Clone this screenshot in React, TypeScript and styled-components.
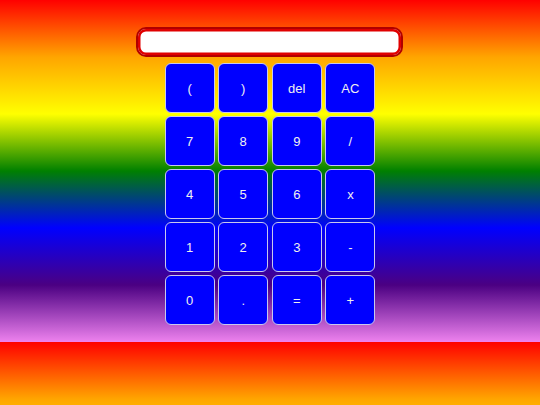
import { createGlobalStyle, styled } from 'styled-components'

const keys = ['(', ')', 'del', 'AC', '7', '8', '9', '/', '4', '5', '6', 'x', '1', '2', '3', '-', '0', '.', '=', '+']

function App() {
  return (
    <>
      <GlobalStyle />
      <Calculator>
        <Display />
        <Keypad>
          {keys.map((k) => (
            <Key key={k}>{k}</Key>
          ))}
        </Keypad>
      </Calculator>
    </>
  )
}
export default App

const GlobalStyle = createGlobalStyle`
  html {
    min-height: 100%;
    background: linear-gradient(red, orange, yellow, green, blue, indigo, violet);
    background-size: 100% 342px;
    background-repeat: repeat-y;
  }
  body {
    margin: 0;
    font-family: "Liberation Sans", Arial, sans-serif;
  }
`

const Calculator = styled.div`
  display: flex;
  flex-direction: column;
  align-items: center;
  padding-top: 27px;
  gap: 6px;
`

const Display = styled.div`
  box-sizing: border-box;
  width: 267px;
  height: 30px;
  margin-left: -1px;
  background: #fff;
  border: 2px solid #b00000;
  border-radius: 10px;
  box-shadow: inset 0 0 0 2.5px #e00000;
`

const Keypad = styled.div`
  display: grid;
  grid-template-columns: repeat(4, 50px);
  grid-auto-rows: 50px;
  row-gap: 3px;
  column-gap: 3.6px;
`

const Key = styled.button`
  box-sizing: border-box;
  width: 50px;
  height: 50px;
  background: #0000ff;
  color: #f0f0f0;
  border: 1px solid #c8c8ee;
  border-radius: 6px;
  font-family: "Liberation Sans", Arial, sans-serif;
  font-size: 13px;
  padding: 0;
`
